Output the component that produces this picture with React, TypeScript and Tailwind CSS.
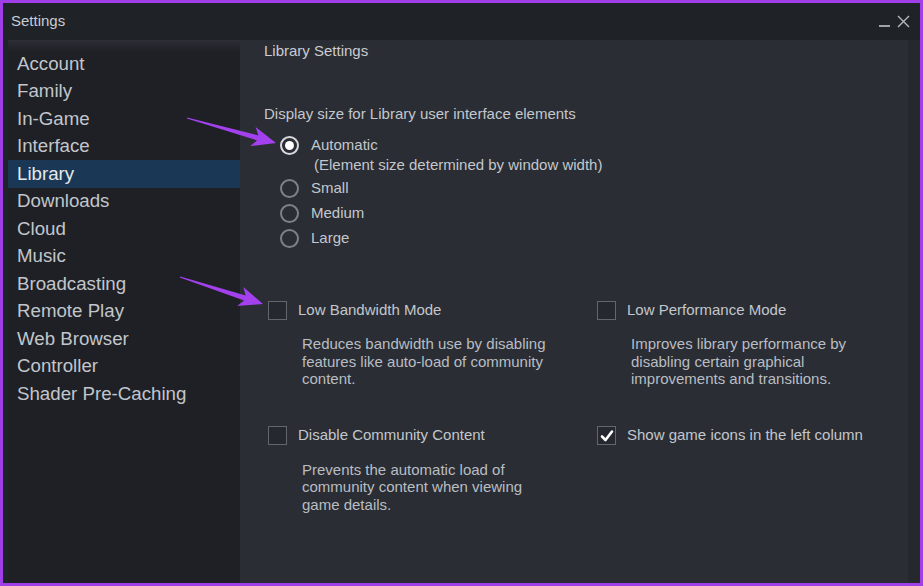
import React from "react";

const navItems = [
  "Account",
  "Family",
  "In-Game",
  "Interface",
  "Library",
  "Downloads",
  "Cloud",
  "Music",
  "Broadcasting",
  "Remote Play",
  "Web Browser",
  "Controller",
  "Shader Pre-Caching",
];

function arrowPoints(tx: number, ty: number, px: number, py: number) {
  const dx = px - tx;
  const dy = py - ty;
  const len = Math.hypot(dx, dy);
  const ux = dx / len;
  const uy = dy / len;
  const nx = -uy;
  const ny = ux;
  const headLen = 24;
  const headW = 10;
  const notch = 5;
  const bx = px - ux * headLen;
  const by = py - uy * headLen;
  const sx = bx + ux * notch;
  const sy = by + uy * notch;
  const pts = [
    [tx + nx * 0.6, ty + ny * 0.6],
    [sx + nx * 2.6, sy + ny * 2.6],
    [bx + nx * headW, by + ny * headW],
    [px, py],
    [bx - nx * headW, by - ny * headW],
    [sx - nx * 2.6, sy - ny * 2.6],
    [tx - nx * 0.6, ty - ny * 0.6],
  ];
  return pts.map((p) => `${p[0].toFixed(1)},${p[1].toFixed(1)}`).join(" ");
}

function Radio({ checked }: { checked?: boolean }) {
  return (
    <span
      className={
        "flex h-[19px] w-[19px] items-center justify-center rounded-full border-2 " +
        (checked ? "border-[#d6d9de]" : "border-[#7d8188]")
      }
    >
      {checked && <span className="h-[9px] w-[9px] rounded-full bg-white" />}
    </span>
  );
}

function Checkbox({ checked }: { checked?: boolean }) {
  return (
    <span className="flex h-[19px] w-[19px] items-center justify-center border border-[#62666d] bg-[#25282e]">
      {checked && (
        <svg width="14" height="14" viewBox="0 0 14 14">
          <path d="M2 7.5 L5.5 11 L12 2.5" fill="none" stroke="#ffffff" strokeWidth="2.6" strokeLinecap="round" strokeLinejoin="round" />
        </svg>
      )}
    </span>
  );
}

function Option({
  label,
  desc,
  checked,
}: {
  label: string;
  desc?: string[];
  checked?: boolean;
}) {
  return (
    <div className="flex flex-col">
      <div className="flex h-[20px] items-center gap-[11px]">
        <Checkbox checked={checked} />
        <span className="text-[15px] text-[#c3c7cd]">{label}</span>
      </div>
      {desc && (
        <div className="mt-[15px] pl-[34px] text-[15px] leading-[17.5px] text-[#b9bdc4]">
          {desc.map((d) => (
            <div key={d}>{d}</div>
          ))}
        </div>
      )}
    </div>
  );
}

export default function App() {
  return (
    <div
      className="relative flex h-[586px] w-[923px] flex-col overflow-hidden border-[3px] border-[#a03fe8] bg-[#1f2227]"
      style={{ fontFamily: '"Liberation Sans", Arial, sans-serif' }}
    >
      {/* title bar */}
      <div className="flex h-[37px] shrink-0 items-center justify-between pl-[8px] pr-[10px]">
        <span className="text-[15px] text-[#c9ccd2]">Settings</span>
        <div className="flex items-center gap-[7px] text-[#b6bac0]">
          <span className="mt-[8px] block h-[2px] w-[11px] bg-[#9fa3a9]" />
          <svg width="13" height="13" viewBox="0 0 13 13">
            <path d="M1 1 L12 12 M12 1 L1 12" stroke="#b6bac0" strokeWidth="1.4" />
          </svg>
        </div>
      </div>

      <div className="flex min-h-0 flex-1 pl-[5px]">
        {/* sidebar */}
        <div className="flex w-[232px] shrink-0 flex-col bg-[#1e2025] bg-gradient-to-b from-[#2c2f36] from-[0px] to-[#1e2025] to-[12px] pt-[10px]">
          {navItems.map((item) => (
            <div
              key={item}
              className={
                "flex h-[27.5px] items-center pl-[9px] text-[18.7px] " +
                (item === "Library" ? "bg-[#1a3855] text-[#e6e9ed]" : "text-[#c2c6cc]")
              }
            >
              {item}
            </div>
          ))}
        </div>

        {/* content */}
        <div className="flex min-w-0 flex-1 flex-col bg-[#2a2d33] pl-[24px] pt-[1px]">
          <div className="text-[15px] leading-[20px] text-[#c9ccd2]">Library Settings</div>

          <div className="mt-[43px] text-[15px] leading-[20px] text-[#c3c7cd]">
            Display size for Library user interface elements
          </div>

          <div className="mt-[10px] flex flex-col pl-[16px]">
            <div className="flex h-[22px] items-center gap-[12px]">
              <Radio checked />
              <span className="text-[15px] text-[#c3c7cd]">Automatic</span>
            </div>
            <div className="h-[18px] pl-[34px] text-[15px] leading-[18px] text-[#c3c7cd]">
              (Element size determined by window width)
            </div>
            {["Small", "Medium", "Large"].map((s) => (
              <div key={s} className="mt-[3px] flex h-[22px] items-center gap-[12px]">
                <Radio />
                <span className="text-[15px] text-[#c3c7cd]">{s}</span>
              </div>
            ))}
          </div>

          <div className="mt-[51px] grid grid-cols-[329px_1fr] gap-y-[38px] pl-[4px]">
            <Option
              label="Low Bandwidth Mode"
              desc={[
                "Reduces bandwidth use by disabling",
                "features like auto-load of community",
                "content.",
              ]}
            />
            <Option
              label="Low Performance Mode"
              desc={[
                "Improves library performance by",
                "disabling certain graphical",
                "improvements and transitions.",
              ]}
            />
            <Option
              label="Disable Community Content"
              desc={[
                "Prevents the automatic load of",
                "community content when viewing",
                "game details.",
              ]}
            />
            <Option label="Show game icons in the left column" checked />
          </div>
        </div>

        {/* right edge strip */}
        <div className="w-[12px] shrink-0 bg-[#25282d]" />
      </div>

      {/* annotation arrows */}
      <svg className="pointer-events-none absolute left-[-3px] top-[-3px]" width="923" height="586">
        <polygon points={arrowPoints(187, 118, 276, 143)} fill="#a341ef" />
        <polygon points={arrowPoints(180, 277, 263, 304)} fill="#a341ef" />
      </svg>
    </div>
  );
}
